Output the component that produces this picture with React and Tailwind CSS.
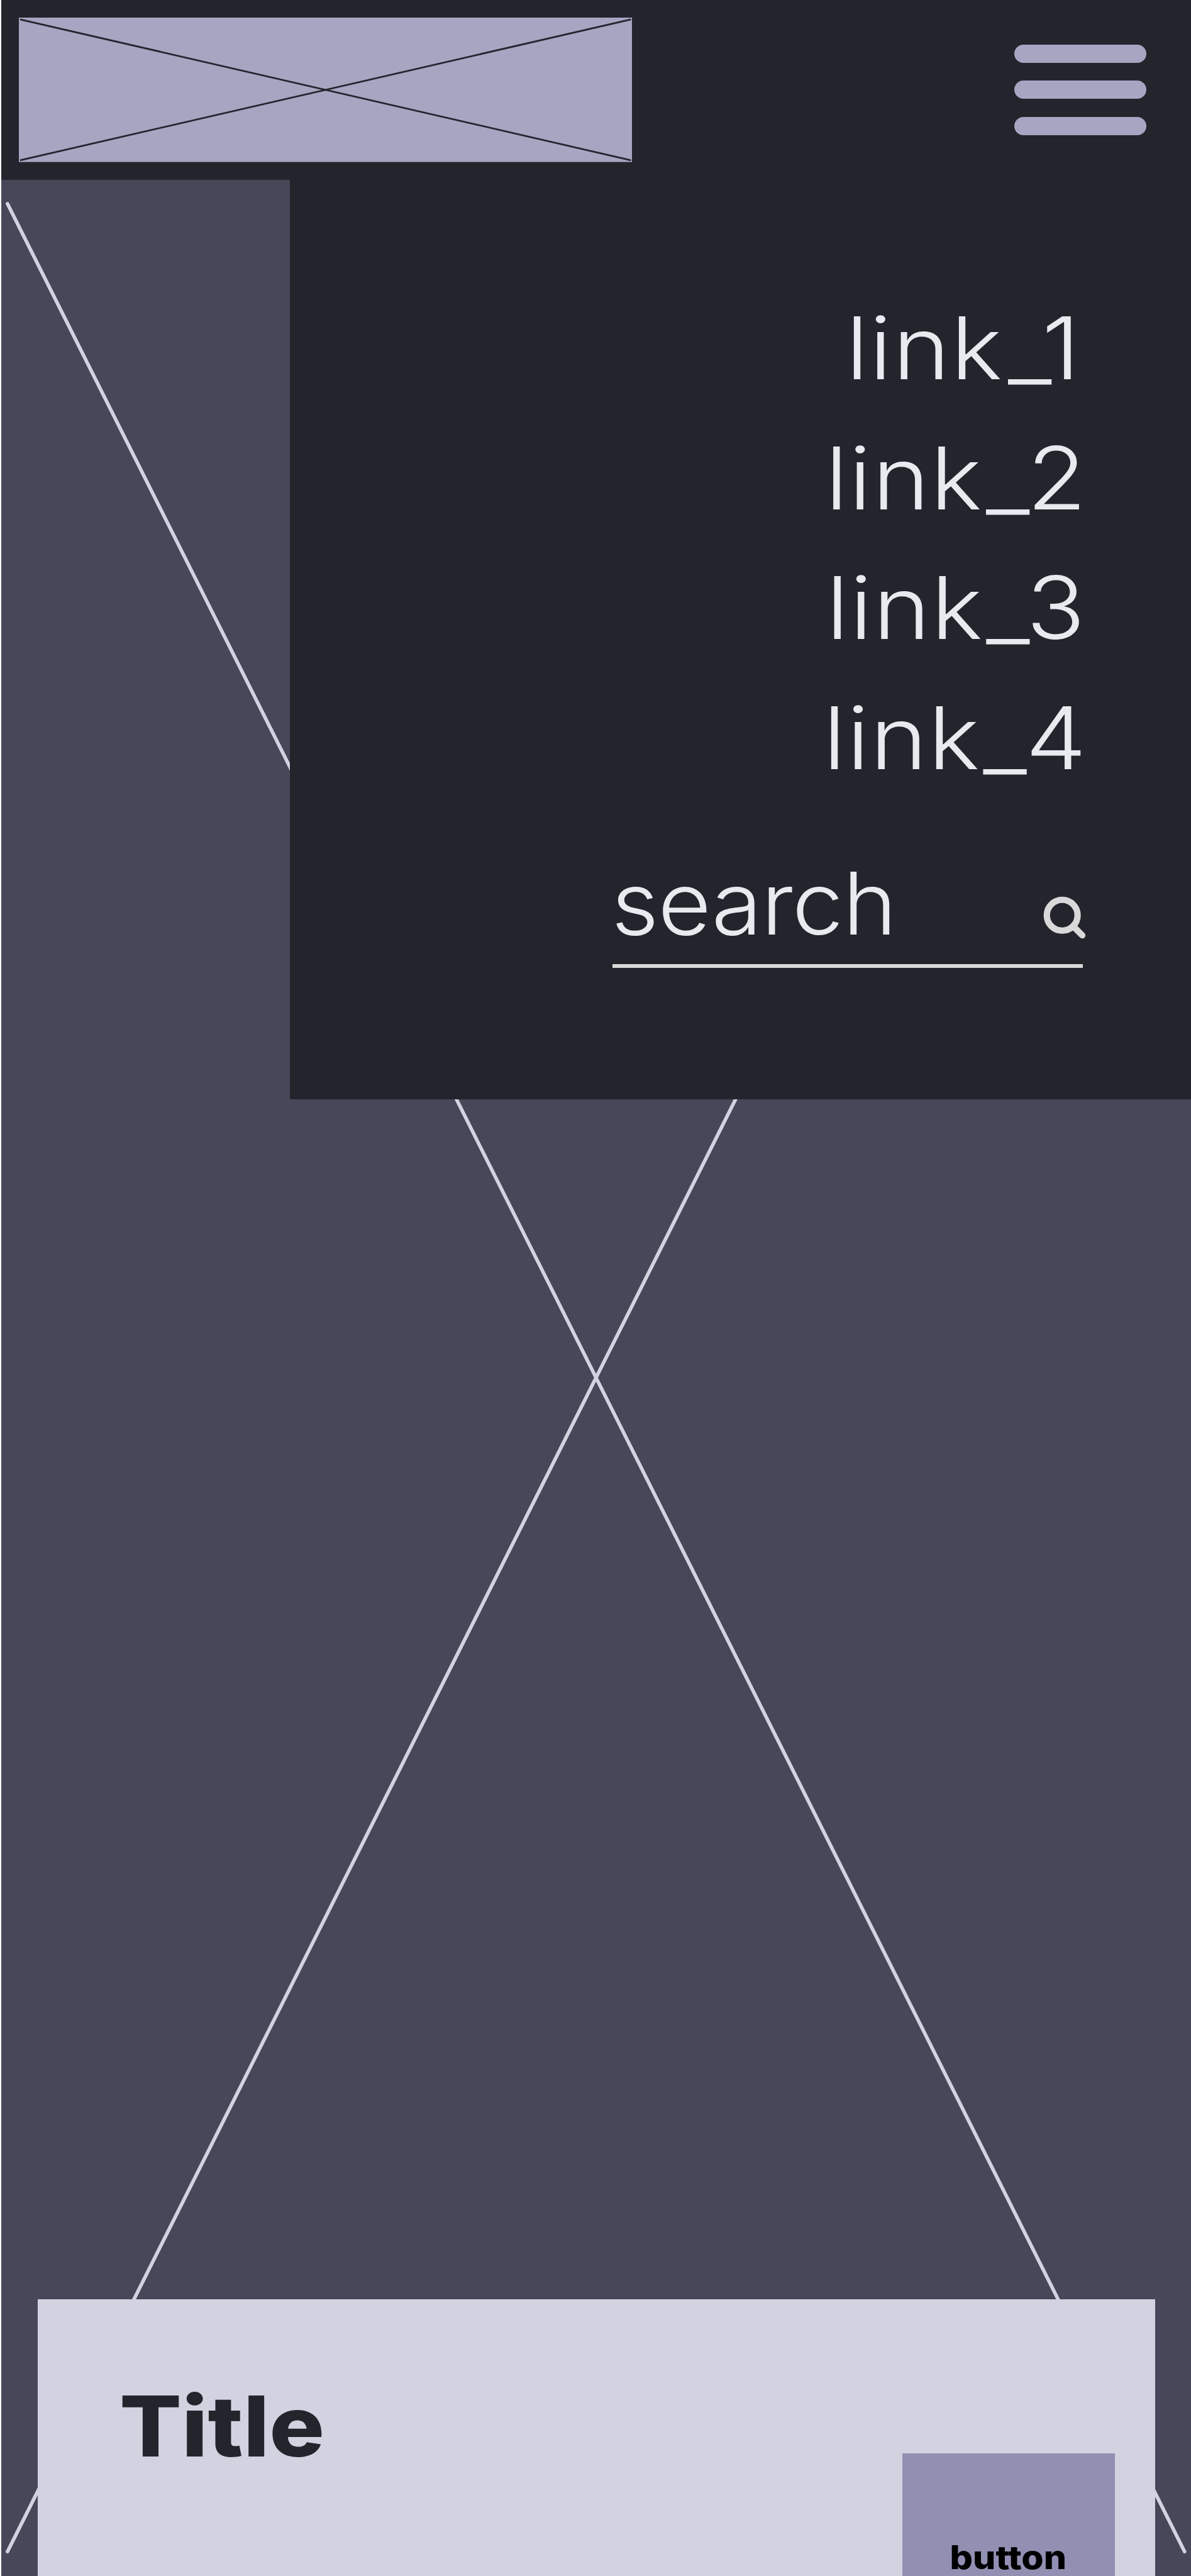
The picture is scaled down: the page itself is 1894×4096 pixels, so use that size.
const links = [
  { number: 1, inset: "mr-[10px]", bar: "ml-[7px]" },
  { number: 2, inset: "", bar: "ml-[5px] mr-[-5px]" },
  { number: 3, inset: "mr-[3px]", bar: "ml-[4px]" },
  { number: 4, inset: "", bar: "ml-[4px] mr-[-3px]" },
];

function Logo() {
  return (
    <svg className="block h-[229.6px] w-[975.1px]" viewBox="0 0 975.1 229.6">
      <rect width="975.1" height="229.6" fill="#a7a5c2" />
      <path
        d="M3 3.1 972.3 226.6M972.3 3.1 3 226.6"
        stroke="#24242d"
        strokeWidth="2.75"
        strokeLinecap="round"
      />
    </svg>
  );
}

function MenuButton() {
  return (
    <button aria-label="Menu" className="flex w-[210px] flex-col gap-[28.3px]">
      <span className="h-[29px] rounded-full bg-[#a7a5c2]" />
      <span className="h-[29px] rounded-full bg-[#a7a5c2]" />
      <span className="h-[29px] rounded-full bg-[#a7a5c2]" />
    </button>
  );
}

function SearchIcon() {
  return (
    <svg
      className="mt-[78px] mr-[-5px] h-[64px] w-[64px] overflow-visible"
      viewBox="0 0 64 64"
      fill="none"
      stroke="#d9d9d9"
      strokeWidth="10.1"
      strokeLinecap="round"
    >
      <circle cx="26.2" cy="25.3" r="24.5" />
      <path d="M43.5 42.6 58.1 57.3" />
    </svg>
  );
}

function Menu() {
  return (
    <nav className="relative flex h-[1462px] w-[1433px] flex-col items-end self-end bg-[#24242d] pt-[164.4px] pr-[164.6px] text-[138px] font-light text-[#e9e9f0]">
      {links.map(({ number, inset, bar }) => (
        <a
          key={number}
          className={`origin-right scale-x-112 leading-[206.5px] tracking-[1.2px] ${inset}`}
        >
          link<span className={bar}>_</span>
          {number}
        </a>
      ))}
      <div className="mt-[75.8px] mr-[7px] flex h-[187px] w-[748px] items-start justify-between border-b-6 border-[#d9d9d9]">
        <span className="ml-[-2px] origin-left scale-x-106 leading-[167px] tracking-[-1.1px]">
          search
        </span>
        <SearchIcon />
      </div>
    </nav>
  );
}

function HeroBackdrop() {
  return (
    <svg
      className="absolute inset-0 h-full w-full"
      viewBox="0 0 1892 3810"
      preserveAspectRatio="none"
    >
      <path
        d="M9.9 37.9 1881.8 3771.2M1881.8 37.9 9.9 3771.2"
        stroke="#d3d2e0"
        strokeWidth="5.6"
        strokeLinecap="round"
      />
    </svg>
  );
}

function Card() {
  return (
    <section className="relative mt-auto mr-[57px] ml-[58px] flex h-[440px] items-start justify-between overflow-hidden bg-[#d3d2e0]">
      <h1 className="mt-[122px] ml-[130.3px] origin-left scale-x-110 text-[133px] leading-[160px] font-extrabold text-[#24242d]">
        Title
      </h1>
      <button className="mt-[245px] mr-[64.5px] flex h-[195px] w-[338px] justify-center bg-[#918fb2] pt-[135.5px] text-black">
        <span className="scale-x-110 text-[52px] leading-[60px] font-extrabold">button</span>
      </button>
    </section>
  );
}

export default function App() {
  return (
    <div className="flex h-[4096px] w-[1894px] flex-col overflow-hidden bg-white pl-[2px] font-['Inter',sans-serif]">
      <header className="flex h-[286px] shrink-0 items-start justify-between bg-[#24242d] pt-[28.2px] pr-[71px] pl-[28.3px]">
        <Logo />
        <div className="pt-[42.8px]">
          <MenuButton />
        </div>
      </header>
      <main className="relative flex h-[3810px] flex-col bg-[#484759]">
        <HeroBackdrop />
        <Menu />
        <Card />
      </main>
    </div>
  );
}
